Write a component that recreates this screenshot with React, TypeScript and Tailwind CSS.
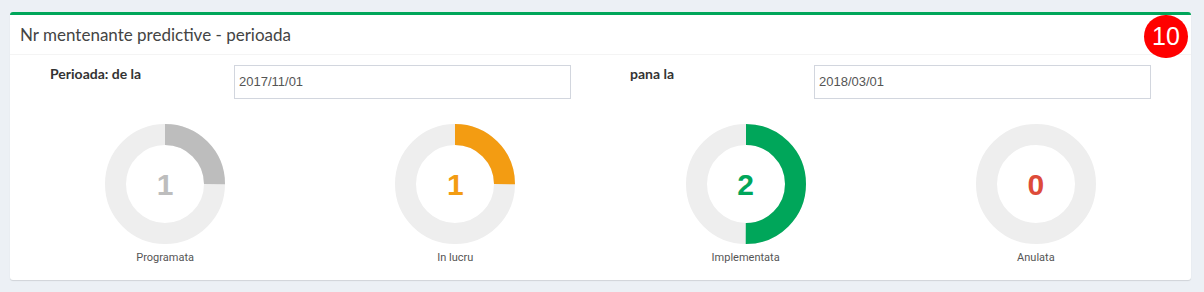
import React from "react";

type D = { value: number; pct: number; color: string; label: string };

const data: D[] = [
  { value: 1, pct: 0.25, color: "#bdbdbd", label: "Programata" },
  { value: 1, pct: 0.25, color: "#f39c12", label: "In lucru" },
  { value: 2, pct: 0.5, color: "#00a65a", label: "Implementata" },
  { value: 0, pct: 0, color: "#dd4b39", label: "Anulata" },
];

function Donut({ d }: { d: D }) {
  const r = 49.5;
  const c = 2 * Math.PI * r;
  return (
    <div className="flex flex-col items-center">
      <div className="relative w-[120px] h-[120px]">
        <svg width="120" height="120" viewBox="0 0 120 120">
          <circle cx="60" cy="60" r={r} fill="none" stroke="#eeeeee" strokeWidth="21" />
          {d.pct > 0 && (
            <circle
              cx="60"
              cy="60"
              r={r}
              fill="none"
              stroke={d.color}
              strokeWidth="21"
              strokeDasharray={`${c * d.pct} ${c}`}
              transform="rotate(-90 60 60)"
            />
          )}
        </svg>
        <div
          className="absolute inset-0 flex items-center justify-center text-[30px] font-bold"
          style={{ color: d.color, fontFamily: '"Liberation Sans", Arial, sans-serif' }}
        >
          {d.value}
        </div>
      </div>
      <div className="mt-[7px] text-[11px] leading-[14px] text-[#555] font-normal font-['Roboto',sans-serif]">{d.label}</div>
    </div>
  );
}

export default function App() {
  return (
    <div className="min-h-[292px] bg-[#ecf0f5] pt-[12px] pl-[10px]">
      <div className="relative w-[1181px] h-[268px] bg-white border-t-[3px] border-[#00a65a] rounded-[3px] shadow-[0_1px_1px_rgba(0,0,0,0.12)]">
        <div className="h-[40px] border-b border-[#f4f4f4] flex items-center pl-[10px]">
          <span className="text-[17px] text-[#444] font-['Lato',sans-serif]">
            Nr mentenante predictive - perioada
          </span>
        </div>
        <div className="absolute left-[1134px] top-0 w-[44px] h-[43px] rounded-full bg-[#ff0000] flex items-center justify-center text-white text-[25px] font-['Liberation_Sans',Arial,sans-serif]">
          10
        </div>
        <div className="px-[10px] pt-[9px]">
          <div className="flex">
            {[
              { label: "Perioada: de la", value: "2017/11/01" },
              { label: "pana la", value: "2018/03/01" },
            ].map((f) => (
              <div key={f.label} className="w-[580px] flex">
                <div className="w-[214px] pl-[30px] text-[14px] leading-[20px] font-bold text-[#333] font-['Lato',sans-serif]">
                  {f.label}
                </div>
                <div className="mt-[1px] w-[337px] h-[34px] border border-[#d2d6de] flex items-center pl-[4px] text-[13px] text-[#555] font-['Liberation_Sans',Arial,sans-serif]">
                  {f.value}
                </div>
              </div>
            ))}
          </div>
          <div className="grid grid-cols-4 mt-[25px]">
            {data.map((d) => (
              <Donut key={d.label} d={d} />
            ))}
          </div>
        </div>
      </div>
    </div>
  );
}
